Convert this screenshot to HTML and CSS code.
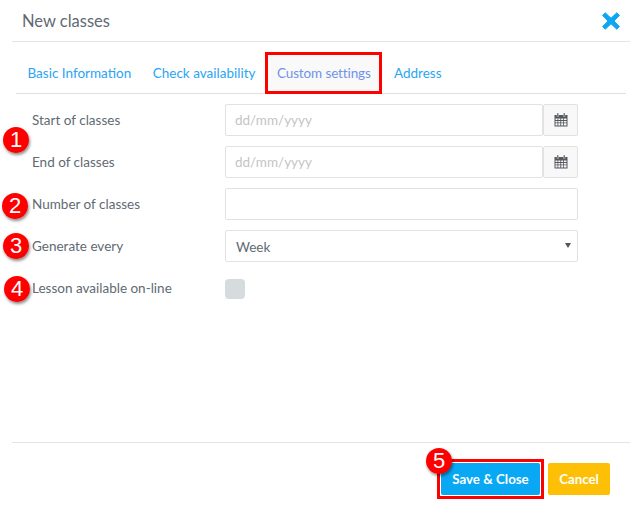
FILE: index.html
```html
<!DOCTYPE html>
<html lang="en">
<head>
<meta charset="utf-8">
<title>New classes</title>
<link rel="stylesheet" href="styles.css">
</head>
<body>
<div class="dialog">
  <header class="head">
    <h1 class="title">New classes</h1>
    <svg class="close" viewBox="0 0 18 18" width="18" height="18" aria-label="Close"><path d="M3.2 0.8 9 6.2 14.8 0.8 17.4 3.4 12 9 17.4 14.6 14.8 17.2 9 11.8 3.2 17.2 0.6 14.6 6 9 0.6 3.4Z" fill="#0ba7f4" stroke="#0ba7f4" stroke-linejoin="round"/></svg>
  </header>
  <nav class="tabs">
    <a class="tab">Basic Information</a>
    <a class="tab">Check availability</a>
    <a class="tab active">Custom settings</a>
    <a class="tab">Address</a>
  </nav>
  <form class="form">
    <div class="row">
      <label class="label">Start of classes</label>
      <div class="group">
        <div class="input placeholder">dd/mm/yyyy</div>
        <div class="addon"><svg class="cal" viewBox="0 0 14 14" width="14" height="14"><use href="#cal"/></svg></div>
      </div>
    </div>
    <div class="row">
      <label class="label">End of classes</label>
      <div class="group">
        <div class="input placeholder">dd/mm/yyyy</div>
        <div class="addon"><svg class="cal" viewBox="0 0 14 14" width="14" height="14"><use href="#cal"/></svg></div>
      </div>
    </div>
    <div class="row">
      <label class="label">Number of classes</label>
      <div class="group"><div class="input"></div></div>
    </div>
    <div class="row">
      <label class="label">Generate every</label>
      <div class="group"><div class="input select">Week<span class="caret"></span></div></div>
    </div>
    <div class="row">
      <label class="label">Lesson available on-line</label>
      <div class="group"><span class="check"></span></div>
    </div>
  </form>
  <footer class="foot">
    <span class="highlight"><button class="btn save" type="button">Save &amp; Close</button></span>
    <button class="btn cancel" type="button">Cancel</button>
  </footer>
</div>
<span class="badge b1">1</span>
<span class="badge b2">2</span>
<span class="badge b3">3</span>
<span class="badge b4">4</span>
<span class="badge b5">5</span>
<svg class="defs" width="0" height="0"><defs>
  <g id="cal">
    <path d="M0.5 2h13v11.5h-13Z" fill="#55595e"/>
    <path d="M1.5 5.5h2v1.5h-2ZM4.3 5.5h2v1.5h-2ZM7.2 5.5h2v1.5h-2ZM10 5.5h2.5v1.5h-2.5ZM1.5 7.9h2v1.5h-2ZM4.3 7.9h2v1.5h-2ZM7.2 7.9h2v1.5h-2ZM10 7.9h2.5v1.5h-2.5ZM1.5 10.3h2v2.2h-2ZM4.3 10.3h2v2.2h-2ZM7.2 10.3h2v2.2h-2ZM10 10.3h2.5v2.2h-2.5Z" fill="#f8f8f8"/>
    <path d="M3 0h1.6v3.4H3ZM9.4 0H11v3.4H9.4Z" fill="#55595e" stroke="#f8f8f8" stroke-width=".4"/>
  </g>
</defs></svg>
</body>
</html>
```

FILE: styles.css
```css
* { box-sizing: border-box; }
html, body { margin: 0; padding: 0; background: #fff; }
body {
  width: 641px;
  height: 509px;
  position: relative;
  overflow: hidden;
  font-family: "Lato", "Open Sans", sans-serif;
  font-size: 13.5px;
  color: #5f6a72;
}
.dialog { padding: 0 11px 0 12px; height: 509px; display: flex; flex-direction: column; }
.head {
  height: 42px;
  flex: none;
  display: flex;
  align-items: center;
  justify-content: space-between;
  padding: 0 10px;
  border-bottom: 1px solid #e4e4e4;
}
.title { margin: 0; font-size: 16.5px; font-weight: 400; color: #5f6a72; }
.tabs {
  margin: 10px 4px 0 4px;
  height: 42px;
  flex: none;
  display: flex;
  border-bottom: 1px solid #dfdfdf;
}
.tab {
  height: 42px;
  padding: 0 10px 0 11.5px;
  display: flex;
  align-items: center;
  white-space: nowrap;
  color: #2aa5f3;
}
.tab.active {
  background: #f9f9f9;
  color: #6f93ea;
  border: 3px solid #f00;
  width: 117px;
  flex: none;
  margin-left: 0;
  padding: 0 6px 0 8.5px;
  letter-spacing: -0.12px;
}
.form { padding: 10px 0 0 20px; flex: 1; }
.row { display: flex; height: 32px; margin-bottom: 10px; align-items: center; }
.label { width: 193px; white-space: nowrap; }
.group { width: 353px; display: flex; height: 32px; align-items: center; }
.input {
  flex: 1;
  height: 32px;
  background: #fff;
  border: 1px solid #e2e2e2;
  border-radius: 2px;
  padding: 0 10px 0 9px;
  display: flex;
  align-items: center;
  color: #5f6a72;
}
.placeholder { color: #c4c4c4; }
.select { position: relative; padding: 2px 10px 0; }
.caret {
  position: absolute;
  right: 6px;
  top: 12px;
  border-left: 3.5px solid transparent;
  border-right: 3.5px solid transparent;
  border-top: 5px solid #555;
}
.addon {
  flex: none;
  width: 35px;
  height: 32px;
  background: #f8f8f8;
  border: 1px solid #e2e2e2;
  border-radius: 2px;
  display: flex;
  align-items: center;
  justify-content: center;
}
.check { width: 20px; height: 20px; margin-top: 2px; background: #d6dbde; border-radius: 4px; }
.foot {
  height: 67px;
  flex: none;
  border-top: 1px solid #e4e4e4;
  display: flex;
  justify-content: flex-end;
  align-items: flex-start;
  gap: 4px;
  padding: 20px 20px 0 0;
}
.highlight {
  display: flex;
  margin-top: -4px;
  padding: 1px;
  border: 3px solid #f00;
}
.btn {
  height: 32px;
  border: 0;
  border-radius: 2px;
  color: #fff;
  font-family: inherit;
  font-size: 13.3px;
  font-weight: 700;
  padding: 0;
}
.save { width: 99px; background: #08a8f4; }
.cancel { width: 62px; background: #fdc006; }
.badge {
  position: absolute;
  width: 26px;
  height: 26px;
  border-radius: 50%;
  background: radial-gradient(circle at 45% 40%, #f00 60%, #d80000 100%);
  box-shadow: 1px 2px 3px rgba(0,0,0,.45);
  color: #fff;
  font-family: "Liberation Sans", sans-serif;
  font-size: 22px;
  line-height: 26px;
  text-align: center;
}
.b1 { left: 3px; top: 127px; }
.b2 { left: 2px; top: 193px; }
.b3 { left: 3px; top: 233px; }
.b4 { left: 4px; top: 276px; }
.b5 { left: 426px; top: 448px; }
.defs { position: absolute; }
```
